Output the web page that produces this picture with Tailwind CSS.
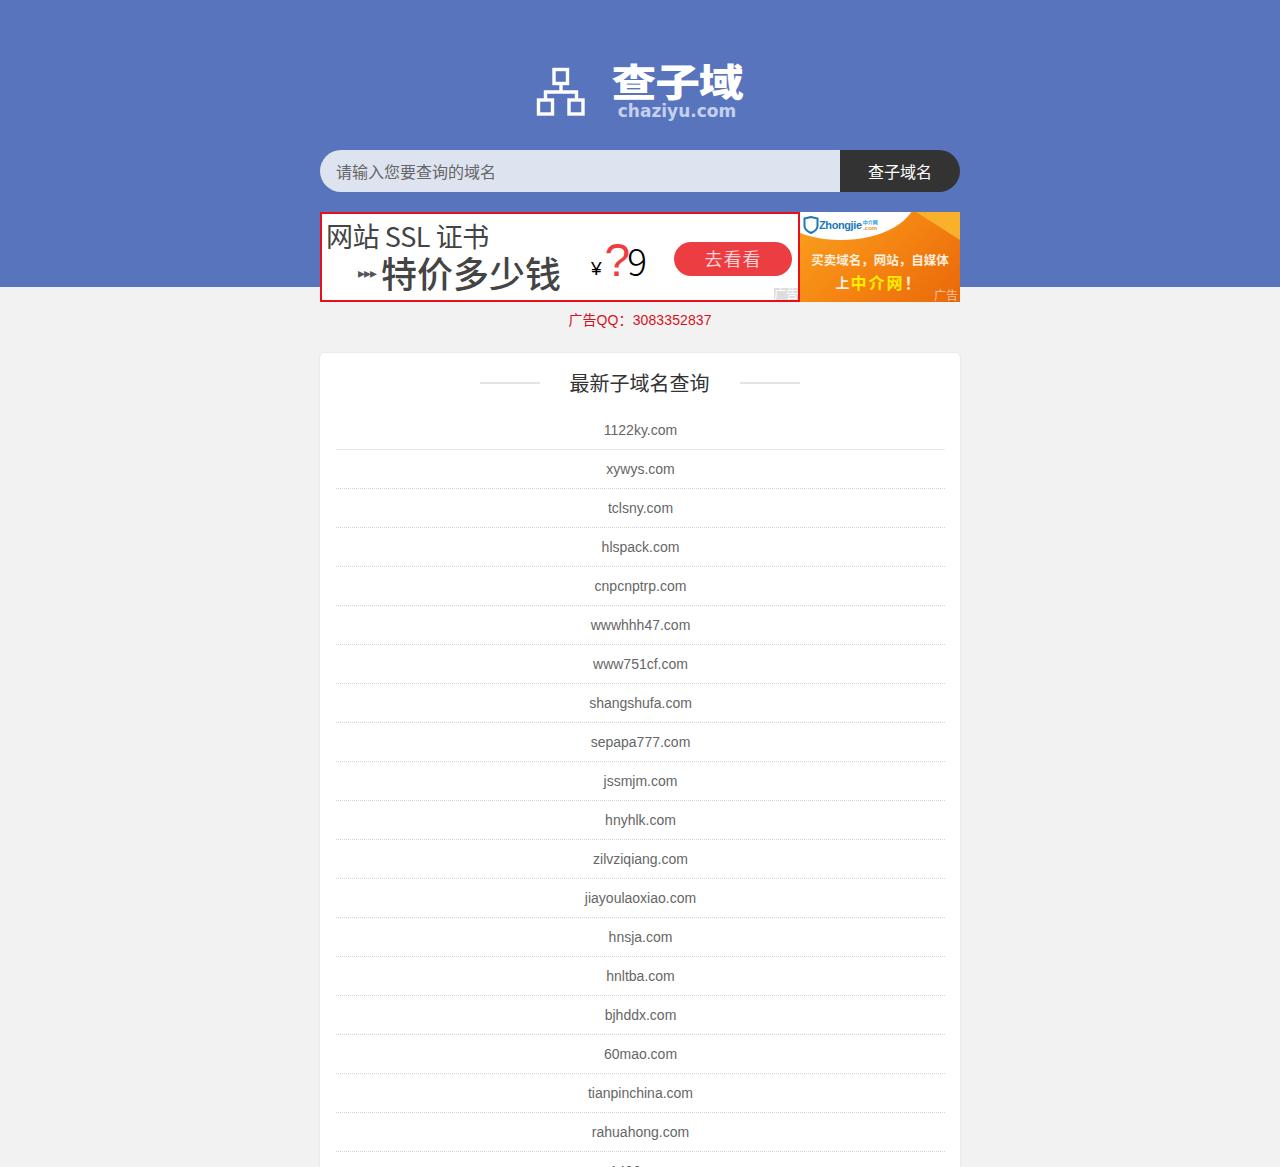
<!DOCTYPE html>
<html lang="zh-CN">
<head>
    <meta charset="UTF-8">
    <meta name="viewport" content="width=device-width, initial-scale=1.0">
    <title>查子域</title>
    <script src="https://cdn.jsdelivr.net/npm/@tailwindcss/browser@4"></script>
</head>
<body class="bg-[#f2f2f2] h-screen overflow-hidden font-['Liberation_Sans','Noto_Sans_CJK_SC',sans-serif]">
    <!-- Header -->
    <header class="bg-[#5874bd] h-[287px] pt-[62px]">
        <div class="flex justify-center h-[58px]">
            <svg class="w-[50px] h-[50px] mt-[5px] mr-[24px]" viewBox="0 0 50 50" fill="none" stroke="#fff" stroke-width="3.4">
                <rect x="18" y="2.5" width="13.5" height="14"/>
                <rect x="2.5" y="33" width="14" height="14"/>
                <rect x="33" y="33" width="14" height="14"/>
                <path d="M25 16v9M9.5 33v-8h31v8"/>
            </svg>
            <div class="w-[134px] text-center">
                <div class="text-[38px] leading-[40px] mt-[1px] font-black text-white tracking-[-1px] whitespace-nowrap scale-x-[1.18]">查子域</div>
                <div class="text-[17px] leading-[16px] font-bold text-[#c3d0f0] font-['DejaVu_Sans',sans-serif]">chaziyu.com</div>
            </div>
        </div>

        <!-- Search -->
        <form class="flex w-[640px] h-[42px] mx-auto mt-[30px]">
            <div class="w-[520px] bg-[#dee3f0] rounded-l-[21px] pl-4 text-[16px] leading-[43px] text-[#666] font-['Noto_Sans_CJK_SC',sans-serif]">请输入您要查询的域名</div>
            <button type="button" class="w-[120px] bg-[#333] rounded-r-[21px] text-white text-[16px] leading-[43px] font-['Noto_Sans_CJK_SC',sans-serif]">查子域名</button>
        </form>

        <!-- Ads -->
        <div class="flex w-[640px] h-[90px] mx-auto mt-[20px] font-['Noto_Sans_CJK_SC',sans-serif]">
            <div class="relative w-[480px] bg-white border-2 border-[#e60f1a] overflow-hidden text-[#444]">
                <div class="text-[27px] leading-[30px] pl-[4px] pt-[7px] tracking-[-0.4px] whitespace-nowrap">网站 SSL 证书</div>
                <div class="flex items-center pl-[36px] h-[42px]">
                    <span class="text-[14px] tracking-[-1px] w-[23px] text-[#555]">▸▸▸</span>
                    <span class="text-[36px] leading-[42px] font-medium whitespace-nowrap">特价多少钱</span>
                    <span class="text-[19px] text-black ml-[30px] -mt-[6px] font-['Liberation_Sans',sans-serif]">¥</span>
                    <span class="text-[46px] leading-[42px] text-[#ee3c3f] ml-[3px] -mt-[24px] tracking-[-3px] font-['Liberation_Sans',sans-serif]">?</span>
                    <span class="text-[37px] leading-[42px] text-black font-light -mt-[24px]">9</span>
                </div>
                <div class="absolute left-[352px] top-[28px] w-[118px] h-[34px] rounded-full bg-[#ec3d42] text-[#f8d0d0] text-[18px] leading-[32px] text-center tracking-[1px]">去看看</div>
                <div class="absolute right-0 bottom-0 w-[24px] h-[12px] bg-[#ddd] text-white text-[12px] leading-[12px]">广告</div>
            </div>
            <div class="relative w-[160px] bg-[linear-gradient(135deg,#f9a11e_0%,#f58412_50%,#e9680a_100%)] overflow-hidden text-center">
                <div class="absolute -left-[34px] -top-[58px] w-[150px] h-[86px] rounded-[50%] bg-white"></div>
                <div class="absolute right-0 top-0 w-0 h-0 border-l-[44px] border-l-transparent border-t-[28px] border-t-[#f9b02a]"></div>
                <div class="relative flex items-center h-[28px] pl-[3px] -mt-[1px]">
                    <svg class="w-[16px] h-[18px]" viewBox="0 0 16 18" fill="none" stroke="#1c79b8" stroke-width="2"><path d="M1.500 2.500 8 1l6.500 1.500V10c0 3-3 5.500-6.500 7C4.500 15.500 1.500 13 1.500 10z"/></svg>
                    <span class="text-[11px] font-bold text-[#1c79b8] font-['Liberation_Sans',sans-serif] tracking-[-0.4px]">Zhongjie</span>
                    <span class="flex flex-col text-[5px] leading-[6px] font-bold ml-[1px]">
                        <span class="text-[#2c9ad8] whitespace-nowrap">中介网</span>
                        <span class="text-[#e8912a] font-['Liberation_Sans',sans-serif] text-[6px]">.com</span>
                    </span>
                </div>
                <div class="relative text-[12.5px] leading-[20px] font-bold text-[#fdeedd] mt-[11px] whitespace-nowrap">买卖域名，网站，自媒体</div>
                <div class="relative flex items-center justify-center h-[22px] mt-[1px] pr-[4px]">
                    <span class="text-[14px] text-[#fdeedd] font-bold mr-[1px]">上</span>
                    <span class="text-[16px] text-[#ffee00] font-bold tracking-[2px]">中介网</span>
                    <span class="text-[16px] text-[#fdeedd] font-bold">！</span>
                </div>
                <div class="absolute right-[2px] bottom-0 text-[12px] leading-[14px] text-white/60">广告</div>
            </div>
        </div>
    </header>

    <div class="text-center text-[14px] leading-[20px] text-[#d8111a] tracking-[0.1px] mt-[23px]">广告QQ：3083352837</div>

    <!-- Latest lookups -->
    <main class="w-[640px] mx-auto mt-[23px] bg-white rounded-[5px] shadow-[0_0_3px_rgba(0,0,0,0.08)] pl-4 pr-[15px]">
        <div class="flex items-center justify-center h-[58px] pt-[2px] pr-[2px]">
            <span class="w-[60px] h-[2px] bg-[#e4e4e4] mr-[30px]"></span>
            <h2 class="text-[20px] leading-[56px] text-[#333] font-['Noto_Sans_CJK_SC',sans-serif]">最新子域名查询</h2>
            <span class="w-[60px] h-[2px] bg-[#e4e4e4] ml-[30px]"></span>
        </div>
        <ul class="text-center text-[14px] text-[#666]">
            <li class="h-[39px] leading-[38px] border-b border-[#e8e8e8]">1122ky.com</li>
            <li class="h-[39px] leading-[38px] border-b border-dotted border-[#d4d4d4]">xywys.com</li>
            <li class="h-[39px] leading-[38px] border-b border-dotted border-[#d4d4d4]">tclsny.com</li>
            <li class="h-[39px] leading-[38px] border-b border-dotted border-[#d4d4d4]">hlspack.com</li>
            <li class="h-[39px] leading-[38px] border-b border-dotted border-[#d4d4d4]">cnpcnptrp.com</li>
            <li class="h-[39px] leading-[38px] border-b border-dotted border-[#d4d4d4]">wwwhhh47.com</li>
            <li class="h-[39px] leading-[38px] border-b border-dotted border-[#d4d4d4]">www751cf.com</li>
            <li class="h-[39px] leading-[38px] border-b border-dotted border-[#d4d4d4]">shangshufa.com</li>
            <li class="h-[39px] leading-[38px] border-b border-dotted border-[#d4d4d4]">sepapa777.com</li>
            <li class="h-[39px] leading-[38px] border-b border-dotted border-[#d4d4d4]">jssmjm.com</li>
            <li class="h-[39px] leading-[38px] border-b border-dotted border-[#d4d4d4]">hnyhlk.com</li>
            <li class="h-[39px] leading-[38px] border-b border-dotted border-[#d4d4d4]">zilvziqiang.com</li>
            <li class="h-[39px] leading-[38px] border-b border-dotted border-[#d4d4d4]">jiayoulaoxiao.com</li>
            <li class="h-[39px] leading-[38px] border-b border-dotted border-[#d4d4d4]">hnsja.com</li>
            <li class="h-[39px] leading-[38px] border-b border-dotted border-[#d4d4d4]">hnltba.com</li>
            <li class="h-[39px] leading-[38px] border-b border-dotted border-[#d4d4d4]">bjhddx.com</li>
            <li class="h-[39px] leading-[38px] border-b border-dotted border-[#d4d4d4]">60mao.com</li>
            <li class="h-[39px] leading-[38px] border-b border-dotted border-[#d4d4d4]">tianpinchina.com</li>
            <li class="h-[39px] leading-[38px] border-b border-dotted border-[#d4d4d4]">rahuahong.com</li>
            <li class="h-[39px] leading-[38px] border-b border-dotted border-[#d4d4d4]">1496.com</li>
        </ul>
    </main>
</body>
</html>
